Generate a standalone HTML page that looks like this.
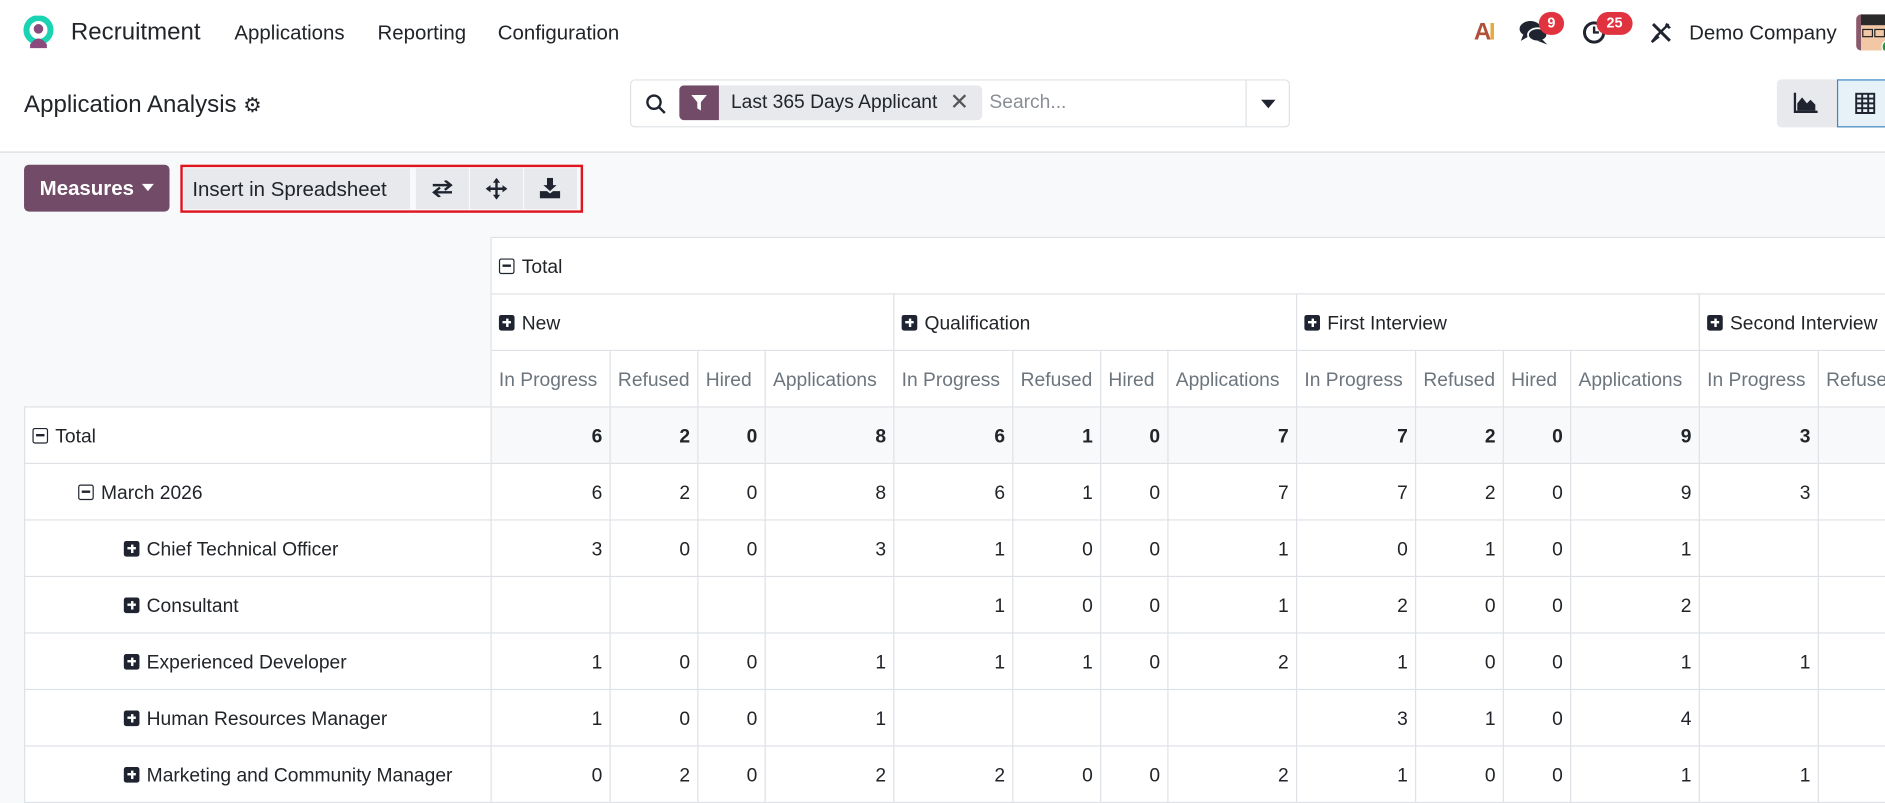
<!DOCTYPE html>
<html><head><meta charset="utf-8">
<style>
html,body{margin:0;padding:0;width:1885px;height:802px;overflow:hidden;background:#f8f9fa;}
#w{position:absolute;left:0;top:0;width:1568px;height:667px;transform:scale(1.2022);transform-origin:0 0;font-family:"Liberation Sans",sans-serif;color:#212529;font-size:16px;}
.abs{position:absolute;}
.nav{left:0;top:0;width:1568px;height:54px;background:#fff;}
.cp{left:0;top:54px;width:1568px;height:72px;background:#fff;border-bottom:1px solid #d8dadd;}
.badge{position:absolute;background:#e0323f;color:#fff;font-size:12px;font-weight:bold;border-radius:10px;height:19px;line-height:19px;text-align:center;}
table{border-collapse:collapse;table-layout:fixed;}
td,th{border:1px solid #dee2e6;height:43px;padding:3px 6px 0;font-weight:normal;white-space:nowrap;overflow:hidden;font-size:16px;box-sizing:content-box;}
th{background:#fff;text-align:left;}
th.m{color:#6c757d;}
td.v{text-align:right;background:#fff;}
tr.t td.v{background:#f8f9fa;font-weight:bold;}
td.h{background:#fff;}
.pl{display:inline-block;width:13px;height:13px;background:#1f2430;border-radius:2px;vertical-align:-1px;margin-right:6px;position:relative;}
.pl:before{content:"";position:absolute;left:3px;top:5.5px;width:7px;height:2px;background:#fff;}
.pl:after{content:"";position:absolute;left:5.5px;top:3px;width:2px;height:7px;background:#fff;}
.mi{display:inline-block;width:11px;height:11px;border:1.3px solid #1f2430;border-radius:2px;vertical-align:-1px;margin-right:6px;position:relative;}
.mi:before{content:"";position:absolute;left:2px;top:4.5px;width:7px;height:1.5px;background:#1f2430;}
</style></head><body><div id="w">
<div class="abs nav">
 <svg class="abs" style="left:19px;top:13px" width="28" height="28" viewBox="0 0 28 28"><circle cx="13" cy="12" r="10" fill="none" stroke="#1ad3b3" stroke-width="5"/><circle cx="13" cy="11" r="4" fill="#8b4a7c"/><path d="M6 24 Q13 14 20 24 L20 27 L6 27Z" fill="#8b4a7c"/></svg>
 <div class="abs" style="left:59px;top:16px;font-size:20px">Recruitment</div>
 <div class="abs" style="left:195px;top:18px;font-size:17px">Applications</div>
 <div class="abs" style="left:314px;top:18px;font-size:17px">Reporting</div>
 <div class="abs" style="left:414px;top:18px;font-size:17px">Configuration</div>
 <div class="abs" style="left:1226px;top:16px;font-size:20px;font-weight:bold;color:#b0503a;letter-spacing:-2px">A<span style="color:#e6a93a">I</span></div>
 <svg class="abs" style="left:1263px;top:16px" width="26" height="22" viewBox="0 0 26 22"><ellipse cx="10" cy="8" rx="9" ry="6.5" fill="#1f2430"/><path d="M4 13 L2 18 L9 14Z" fill="#1f2430"/><ellipse cx="16" cy="13" rx="8" ry="5.5" fill="#1f2430" stroke="#fff" stroke-width="1.5"/><path d="M20 17 L24 21 L16 18Z" fill="#1f2430"/></svg>
 <div class="badge" style="left:1280px;top:10px;width:21px">9</div>
 <svg class="abs" style="left:1316px;top:17px" width="20" height="20" viewBox="0 0 20 20"><circle cx="10" cy="10" r="8" fill="none" stroke="#1f2430" stroke-width="2.5"/><path d="M10 5V10H14" fill="none" stroke="#1f2430" stroke-width="2"/></svg>
 <div class="badge" style="left:1328px;top:10px;width:30px">25</div>
 <svg class="abs" style="left:1372px;top:17px" width="20" height="20" viewBox="0 0 20 20"><path d="M3 3L17 17" stroke="#1f2430" stroke-width="2.5"/><path d="M16 3L5 14" stroke="#1f2430" stroke-width="2"/><path d="M2 18L6 13L7 14Z" fill="#1f2430" stroke="#1f2430" stroke-width="2"/><path d="M14 2L18 6L16 7L13 4Z" fill="#1f2430"/></svg>
 <div class="abs" style="left:1405px;top:18px;font-size:17px">Demo Company</div>
 <div class="abs" style="left:1544px;top:12px;width:30px;height:30px;background:#8a5a6c;border-radius:4px;overflow:hidden">
  <div style="position:absolute;left:4px;top:0;width:22px;height:9px;background:#2a2a2a"></div>
  <div style="position:absolute;left:4px;top:9px;width:22px;height:21px;background:#f1c7a6"></div>
  <div style="position:absolute;left:5px;top:12px;width:7px;height:5px;border:1.5px solid #222"></div>
  <div style="position:absolute;left:15px;top:12px;width:7px;height:5px;border:1.5px solid #222"></div>
  <div style="position:absolute;left:21px;top:21px;width:10px;height:10px;background:#1a9a3a;border-radius:50%;border:1px solid #fff"></div>
 </div>
</div>
<div class="abs cp">
 <div class="abs" style="left:20px;top:22px;font-size:20px">Application Analysis <span style="font-size:17px">⚙</span></div>
 <div class="abs" style="left:524px;top:12px;width:547px;height:38px;border:1px solid #dee2e6;border-radius:4px;background:#fff">
  <svg class="abs" style="left:12px;top:11px" width="17" height="17" viewBox="0 0 17 17"><circle cx="7" cy="7" r="5.5" fill="none" stroke="#1f2430" stroke-width="2"/><path d="M11 11L16 16" stroke="#1f2430" stroke-width="2"/></svg>
  <div class="abs" style="left:40px;top:4px;width:252px;height:29px;background:#e7e9ed;border-radius:4px;overflow:hidden">
   <div class="abs" style="left:0;top:0;width:33px;height:29px;background:#714b67"><svg class="abs" style="left:10px;top:8px" width="13" height="14" viewBox="0 0 13 14"><path d="M0 0H13L8 6V13L5 11V6Z" fill="#fff"/></svg></div>
   <div class="abs" style="left:43px;top:6px;font-size:16px">Last 365 Days Applicant</div>
   <div class="abs" style="left:225px;top:3px;font-size:19px;color:#555">✕</div>
  </div>
  <div class="abs" style="left:298px;top:10px;color:#8a8f95;font-size:16px">Search...</div>
  <div class="abs" style="left:511px;top:0;width:1px;height:38px;background:#dee2e6"></div>
  <div class="abs" style="left:524px;top:16px;border:6px solid transparent;border-top:7px solid #1f2430;width:0;height:0"></div>
 </div>
 <div class="abs" style="left:1478px;top:12px;width:50px;height:40px;background:#e7e9ed;border-radius:4px 0 0 4px"><svg class="abs" style="left:14px;top:11px" width="20" height="17" viewBox="0 0 20 17"><path d="M1 0V16H20" fill="none" stroke="#1f2430" stroke-width="2"/><path d="M3 15L3 9L7 4L11 9L14 6L18 10V15Z" fill="#1f2430"/></svg></div>
 <div class="abs" style="left:1528px;top:12px;width:42px;height:38px;background:#e6f2f7;border:1px solid #3e86c4"><svg class="abs" style="left:14px;top:10px" width="17" height="18" viewBox="0 0 17 18"><path d="M1 1H16V17H1ZM1 5H16M1 9H16M1 13H16M6 1V17M11 1V17" fill="none" stroke="#1f2430" stroke-width="1.6"/></svg></div>
</div>
<div class="abs" style="left:20px;top:137px;width:121px;height:39px;background:#714b67;border-radius:4px;color:#fff;font-weight:bold;font-size:17px;line-height:40px;text-indent:13px">Measures <span style="display:inline-block;border:5px solid transparent;border-top:6px solid #fff;vertical-align:-2px;margin-left:2px"></span></div>
<div class="abs" style="left:150px;top:137px;width:331px;height:36px;border:2px solid #e0141e"></div>
<div class="abs" style="left:153px;top:140px;width:188px;height:34px;background:#e7e9ed;font-size:17px;line-height:36px;text-indent:7px">Insert in Spreadsheet</div>
<div class="abs" style="left:346px;top:140px;width:44px;height:34px;background:#e7e9ed"><svg class="abs" style="left:13px;top:10px" width="18" height="14" viewBox="0 0 18 14"><path d="M1 4H15M11 0L16 4L11 8M17 10H3M7 6L2 10L7 14" fill="none" stroke="#1f2430" stroke-width="2"/></svg></div>
<div class="abs" style="left:391px;top:140px;width:44px;height:34px;background:#e7e9ed"><svg class="abs" style="left:13px;top:8px" width="18" height="18" viewBox="0 0 18 18"><path d="M9 1V17M1 9H17" stroke="#1f2430" stroke-width="2"/><path d="M9 0L12 4H6ZM9 18L12 14H6ZM0 9L4 6V12ZM18 9L14 6V12Z" fill="#1f2430"/></svg></div>
<div class="abs" style="left:436px;top:140px;width:44px;height:34px;background:#e7e9ed"><svg class="abs" style="left:13px;top:8px" width="17" height="17" viewBox="0 0 17 17"><path d="M6 0H11V6H14L8.5 11L3 6H6Z" fill="#1f2430"/><path d="M0 11H6L8.5 13L11 11H17V17H0Z" fill="#1f2430"/></svg></div>

<table class="abs" style="left:20px;top:197px;width:1600px">
<colgroup><col style="width:388px"><col style="width:99px"><col style="width:73px"><col style="width:56px"><col style="width:107px"><col style="width:99px"><col style="width:73px"><col style="width:56px"><col style="width:107px"><col style="width:99px"><col style="width:73px"><col style="width:56px"><col style="width:107px"><col style="width:99px"><col style="width:108px"></colgroup>
<tr><th rowspan="3" style="background:#f8f9fa;border:none;border-right:1px solid #dee2e6"></th><th colspan="14"><span class="mi"></span>Total</th></tr>
<tr><th colspan="4"><span class="pl"></span>New</th><th colspan="4"><span class="pl"></span>Qualification</th><th colspan="4"><span class="pl"></span>First Interview</th><th colspan="2"><span class="pl"></span>Second Interview</th></tr>
<tr><th class="m">In Progress</th><th class="m">Refused</th><th class="m">Hired</th><th class="m">Applications</th><th class="m">In Progress</th><th class="m">Refused</th><th class="m">Hired</th><th class="m">Applications</th><th class="m">In Progress</th><th class="m">Refused</th><th class="m">Hired</th><th class="m">Applications</th><th class="m">In Progress</th><th class="m">Refused</th></tr>
<tr class="t"><td class="h"><span class="mi"></span>Total</td><td class="v">6</td><td class="v">2</td><td class="v">0</td><td class="v">8</td><td class="v">6</td><td class="v">1</td><td class="v">0</td><td class="v">7</td><td class="v">7</td><td class="v">2</td><td class="v">0</td><td class="v">9</td><td class="v">3</td><td class="v"></td></tr>
<tr><td class="h" style="padding-left:44px"><span class="mi"></span>March 2026</td><td class="v">6</td><td class="v">2</td><td class="v">0</td><td class="v">8</td><td class="v">6</td><td class="v">1</td><td class="v">0</td><td class="v">7</td><td class="v">7</td><td class="v">2</td><td class="v">0</td><td class="v">9</td><td class="v">3</td><td class="v"></td></tr>
<tr><td class="h" style="padding-left:82px"><span class="pl"></span>Chief Technical Officer</td><td class="v">3</td><td class="v">0</td><td class="v">0</td><td class="v">3</td><td class="v">1</td><td class="v">0</td><td class="v">0</td><td class="v">1</td><td class="v">0</td><td class="v">1</td><td class="v">0</td><td class="v">1</td><td class="v"></td><td class="v"></td></tr>
<tr><td class="h" style="padding-left:82px"><span class="pl"></span>Consultant</td><td class="v"></td><td class="v"></td><td class="v"></td><td class="v"></td><td class="v">1</td><td class="v">0</td><td class="v">0</td><td class="v">1</td><td class="v">2</td><td class="v">0</td><td class="v">0</td><td class="v">2</td><td class="v"></td><td class="v"></td></tr>
<tr><td class="h" style="padding-left:82px"><span class="pl"></span>Experienced Developer</td><td class="v">1</td><td class="v">0</td><td class="v">0</td><td class="v">1</td><td class="v">1</td><td class="v">1</td><td class="v">0</td><td class="v">2</td><td class="v">1</td><td class="v">0</td><td class="v">0</td><td class="v">1</td><td class="v">1</td><td class="v"></td></tr>
<tr><td class="h" style="padding-left:82px"><span class="pl"></span>Human Resources Manager</td><td class="v">1</td><td class="v">0</td><td class="v">0</td><td class="v">1</td><td class="v"></td><td class="v"></td><td class="v"></td><td class="v"></td><td class="v">3</td><td class="v">1</td><td class="v">0</td><td class="v">4</td><td class="v"></td><td class="v"></td></tr>
<tr><td class="h" style="padding-left:82px"><span class="pl"></span>Marketing and Community Manager</td><td class="v">0</td><td class="v">2</td><td class="v">0</td><td class="v">2</td><td class="v">2</td><td class="v">0</td><td class="v">0</td><td class="v">2</td><td class="v">1</td><td class="v">0</td><td class="v">0</td><td class="v">1</td><td class="v">1</td><td class="v"></td></tr>
</table>
</div></body></html>
